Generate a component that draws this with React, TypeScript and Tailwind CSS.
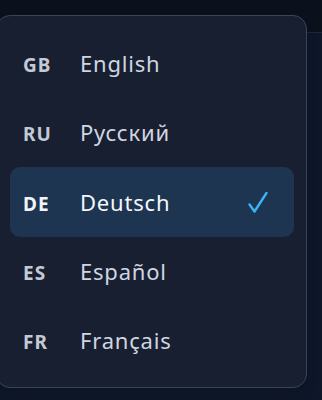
import React from 'react';

const languages = [
  { code: 'GB', name: 'English' },
  { code: 'RU', name: 'Русский' },
  { code: 'DE', name: 'Deutsch' },
  { code: 'ES', name: 'Español' },
  { code: 'FR', name: 'Français' },
];

const CheckMark: React.FC = () => (
  <svg width="22" height="26" viewBox="0 0 22 26" fill="none" className="text-[#3bb4f2]">
    <path
      d="M2.5 15.5 L7.5 22.5 L19.5 4"
      stroke="currentColor"
      strokeWidth="2.4"
      strokeLinecap="round"
      strokeLinejoin="round"
    />
  </svg>
);

const App: React.FC = () => {
  const selected = 'DE';

  return (
    <div
      className="relative w-[322px] h-[400px] overflow-hidden bg-[#0e1729]"
      style={{ fontFamily: '"Noto Sans", "Open Sans", sans-serif' }}
    >
      <div className="h-[33px] bg-[#0b101d] border-b border-[#1c2638]" />

      <div className="absolute left-[-4px] top-[15px] w-[311px] h-[373px] rounded-[14px] border border-[#39445a] bg-[#181f30] pl-[13px] pr-[12px] pt-[13px] shadow-lg">
        {languages.map((lang) => {
          const active = lang.code === selected;
          return (
            <div
              key={lang.code}
              className={
                active
                  ? 'flex items-center h-[70px] rounded-[10px] bg-[#1d3550]'
                  : 'flex items-center h-[69px]'
              }
            >
              <div className="flex items-baseline pl-[13px]">
                <span
                  className={
                    active
                      ? 'w-[57px] text-[19px] font-bold tracking-[1px] text-[#f1f5f9]'
                      : 'w-[57px] text-[19px] font-bold tracking-[1px] text-[#c3cad6]'
                  }
                >
                  {lang.code}
                </span>
                <span
                  className={
                    active
                      ? 'text-[22px] tracking-[0.8px] text-[#f4f7fb]'
                      : 'text-[22px] tracking-[0.8px] text-[#cfd6e1]'
                  }
                >
                  {lang.name}
                </span>
              </div>
              {active && (
                <div className="ml-auto mr-[25px] flex items-center">
                  <CheckMark />
                </div>
              )}
            </div>
          );
        })}
      </div>
    </div>
  );
};

export default App;
